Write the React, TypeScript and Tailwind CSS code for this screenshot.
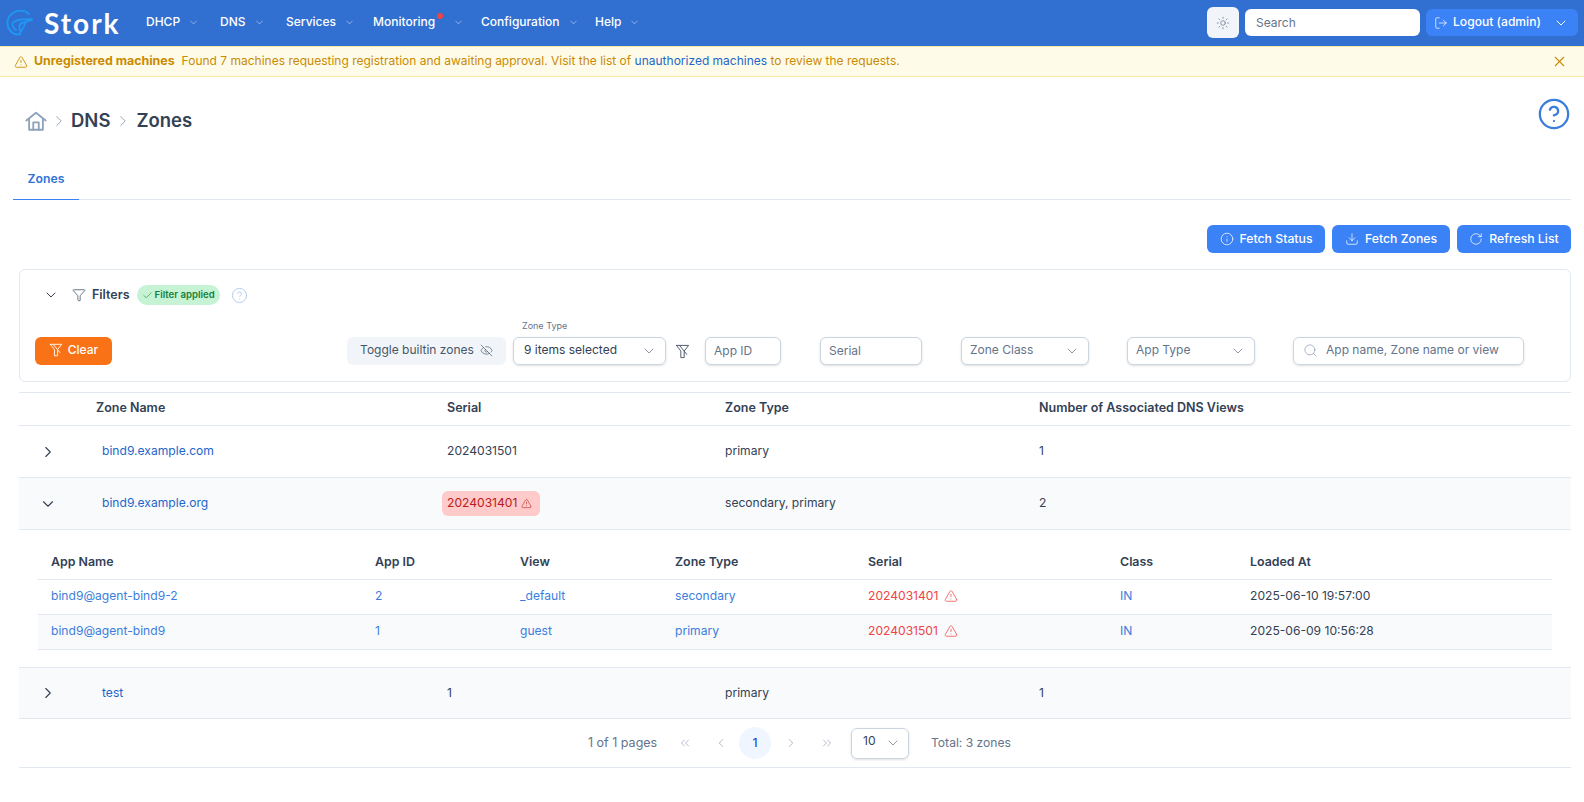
import {
  ChevronDown,
  ChevronLeft,
  ChevronRight,
  ChevronsLeft,
  ChevronsRight,
  Check,
  CircleHelp,
  Download,
  EyeOff,
  Funnel,
  Info,
  LogOut,
  RotateCw,
  Search,
  Sun,
  TriangleAlert,
  X,
} from "lucide-react";

const navItems = [
  { label: "DHCP", w: "w-[74px]" },
  { label: "DNS", w: "w-[66px]" },
  { label: "Services", w: "w-[87px]" },
  { label: "Monitoring", w: "w-[108px]", dot: true },
  { label: "Configuration", w: "w-[114px]" },
  { label: "Help", w: "w-[60px]" },
];

const zoneCols = "grid grid-cols-[77px_351px_278px_314px_1fr] items-center";
const appCols = "grid grid-cols-[324px_145px_155px_193px_252px_130px_1fr] items-center pl-[13px]";

const apps = [
  { name: "bind9@agent-bind9-2", id: "2", view: "_default", type: "secondary", serial: "2024031401", loaded: "2025-06-10 19:57:00", tint: false },
  { name: "bind9@agent-bind9", id: "1", view: "guest", type: "primary", serial: "2024031501", loaded: "2025-06-09 10:56:28", tint: true },
];

function Logo() {
  return (
    <svg width="27" height="27" viewBox="0 0 27 27" fill="none" stroke="#1f96f2" strokeWidth="1.9" strokeLinecap="round" strokeLinejoin="round">
      <path d="M23 5C19 0.8 11 0.5 6 4.5C0.5 9 0 17 4.5 22C7 24.8 11 26 14 25" />
      <path d="M26 10.5C20 9.5 11 10.5 7.5 13C5.5 15 6.5 19 10 21" />
      <path d="M26 10.5L16 14C13.5 15 13 18 14 21C14.5 23 14.5 24 14 25" />
      <path d="M19.5 13.5C18.5 17 17 20 14.5 23" />
    </svg>
  );
}

function HomeIcon() {
  return (
    <svg width="22" height="22" viewBox="0 0 24 24" fill="none" stroke="#8ea2bb" strokeWidth="2" strokeLinejoin="round" strokeLinecap="round">
      <path d="M1.5 11.5L12 3L22.5 11.5" />
      <path d="M4.5 10V21.5H19.5V10" />
      <path d="M9 21.5V13.5H15V21.5" />
    </svg>
  );
}

function FilterSlash({ className }: { className: string }) {
  return (
    <svg className={className} viewBox="0 0 16 16" fill="none" stroke="currentColor" strokeWidth="1" strokeLinejoin="round" strokeLinecap="round">
      <path d="M1.5 1.5H14.5L9.8 7.5V14.5H6.2V7.5L1.5 1.5" />
      <path d="M4.8 1.5L12.5 11" />
    </svg>
  );
}

function FilterInput({ placeholder, width }: { placeholder: string; width: string }) {
  return (
    <input
      readOnly
      placeholder={placeholder}
      className={`${width} h-[28px] rounded-md border border-[#cbd5e1] bg-white px-[8px] pb-[2px] text-[12px] shadow-sm outline-none placeholder:text-[#64748b]`}
    />
  );
}

function FilterSelect({ label, width }: { label: string; width: string }) {
  return (
    <div className={`${width} flex h-[28px] items-center justify-between rounded-md border border-[#cbd5e1] bg-white pl-[8px] pr-[8px] text-[12px] text-[#64748b] shadow-sm`}>
      <span className="-mt-[2px]">{label}</span>
      <ChevronDown className="h-[16px] w-[16px] text-[#64748b]" strokeWidth={1.1} />
    </div>
  );
}

function ActionButton({ icon, label, width }: { icon: React.ReactNode; label: string; width: string }) {
  return (
    <button className={`${width} flex h-[28px] items-center justify-center gap-[6px] rounded-md bg-[#3b82f6] text-[12.25px] font-medium text-white`}>
      {icon}
      {label}
    </button>
  );
}

export default function App() {
  return (
    <div className="min-h-screen w-[1584px] overflow-hidden bg-white font-['Inter',sans-serif] text-[12.1px] text-[#334155]">
      {/* top bar */}
      <header className="flex h-[46px] items-center bg-[#316fd0] pb-[1px] pl-[6px] pr-[6px]">
        <Logo />
        <span className="ml-[11px] w-[73px] font-['Lato',sans-serif] text-[28px] leading-none font-bold tracking-[2px] text-white">Stork</span>
        <nav className="-mt-[1px] ml-[29px] flex items-center text-[12px]">
          {navItems.map((item) => (
            <div key={item.label} className={`${item.w} relative flex items-center gap-[8px] font-medium text-white`}>
              <span className={item.dot ? "mr-[10px]" : ""}>{item.label}</span>
              {item.dot && <span className="absolute left-[64px] top-[0px] h-[6px] w-[6px] rounded-full bg-[#ef4444]" />}
              <ChevronDown className="h-[11px] w-[11px] text-[#bcd0ee]" strokeWidth={1.5} />
            </div>
          ))}
        </nav>
        <button className="ml-auto flex h-[31px] w-[32px] items-center justify-center rounded-md bg-[#f1f5f9]">
          <Sun className="h-[14px] w-[14px] text-[#64748b]" strokeWidth={1.25} />
        </button>
        <input
          readOnly
          placeholder="Search"
          className="ml-[6px] h-[27px] w-[175px] rounded-md bg-white px-[11px] text-[12px] outline-none placeholder:text-[#64748b]"
        />
        <div className="ml-[6px] flex h-[27px] w-[152px] items-center rounded-md bg-[#3b82f6] pl-[8px] pr-[9px] font-medium text-white">
          <LogOut className="mr-[5px] h-[14px] w-[14px]" strokeWidth={1.25} />
          <span>Logout (admin)</span>
          <ChevronDown className="ml-auto h-[16px] w-[16px]" strokeWidth={1.5} />
        </div>
      </header>

      {/* alert */}
      <div className="flex h-[31px] items-center border-y border-[#f8e8a0] bg-[#fefce8] pl-[14px] pr-[16px] text-[#ca8a04]">
        <TriangleAlert className="mr-[6px] h-[14px] w-[14px]" strokeWidth={1.5} />
        <span className="mr-[7px] text-[12.4px] font-bold">Unregistered machines</span>
        <span className="pb-[1px] text-[12px]">
          Found 7 machines requesting registration and awaiting approval. Visit the list of{" "}
          <a className="text-[#1d66cc]">unauthorized machines</a> to review the requests.
        </span>
        <X className="ml-auto h-[17px] w-[17px]" strokeWidth={1.5} />
      </div>

      <main className="pl-[13px] pr-[13px]">
        {/* breadcrumb */}
        <div className="flex h-[83px] items-center justify-between">
          <div className="flex items-center pl-[12px] pt-[4px] text-[18.5px] font-semibold text-[#334155]">
            <HomeIcon />
            <ChevronRight className="mx-[3px] h-[18px] w-[18px] text-[#94a3b8]" strokeWidth={1.25} />
            <span>DNS</span>
            <ChevronRight className="mx-[4px] h-[18px] w-[18px] text-[#94a3b8]" strokeWidth={1.25} />
            <span>Zones</span>
          </div>
          <CircleHelp className="-mt-[9px] h-[34px] w-[34px] text-[#3b7ddd]" strokeWidth={1.6} />
        </div>

        {/* tabs */}
        <div className="h-[40px] border-b border-[#e2e8f0]">
          <div className="flex h-[40px] w-[66px] items-center justify-center border-b border-[#3b82f6] text-[12.25px] font-semibold text-[#2f74d6]">Zones</div>
        </div>

        <div className="pl-[6px]">
          <div className="mt-[25px] flex justify-end gap-[7px]">
            <ActionButton icon={<Info className="h-[14px] w-[14px]" strokeWidth={1.25} />} label="Fetch Status" width="w-[118px]" />
            <ActionButton icon={<Download className="h-[14px] w-[14px]" strokeWidth={1.25} />} label="Fetch Zones" width="w-[118px]" />
            <ActionButton icon={<RotateCw className="h-[14px] w-[14px]" strokeWidth={1.25} />} label="Refresh List" width="w-[114px]" />
          </div>

          {/* filters */}
          <section className="mt-[16px] rounded-md border border-[#e2e8f0] pb-[16px] pt-[15px]">
            <div className="flex h-[20px] items-center pl-[23px]">
              <ChevronDown className="h-[16px] w-[16px] text-[#334155]" strokeWidth={1.5} />
              <Funnel className="ml-[13px] h-[14px] w-[14px] text-[#334155]" strokeWidth={1.25} />
              <span className="ml-[6px] text-[12.5px] font-semibold">Filters</span>
              <span className="ml-[7px] flex h-[20px] w-[83px] items-center justify-center gap-[2px] rounded-full bg-[#c5f3d4] text-[9.6px] font-semibold text-[#15803d]">
                <Check className="h-[11px] w-[11px]" strokeWidth={1.25} />
                Filter applied
              </span>
              <CircleHelp className="ml-[11px] h-[17px] w-[17px] text-[#a9c6f2]" strokeWidth={1.25} />
            </div>
            <div className="mt-[32px] flex h-[28px] items-center pl-[15px] text-[12px]">
              <button className="flex h-[28px] w-[77px] items-center justify-center gap-[5px] rounded-md bg-[#f97316] pb-[2px] font-medium text-white">
                <FilterSlash className="h-[14px] w-[14px]" />
                Clear
              </button>
              <button className="ml-[235px] flex h-[28px] w-[159px] items-center justify-center gap-[6px] rounded-md bg-[#f1f5f9] pb-[2px] text-[#475569]">
                Toggle builtin zones
                <EyeOff className="h-[13px] w-[13px]" strokeWidth={1.25} />
              </button>
              <div className="relative ml-[7px] flex h-[28px] w-[153px] items-center justify-between rounded-md border border-[#cbd5e1] pl-[10px] pr-[8px] text-[#334155] shadow-sm">
                <span className="absolute -top-[19px] left-[8px] text-[9px] text-[#64748b]">Zone Type</span>
                <span className="-mt-[2px]">9 items selected</span>
                <ChevronDown className="h-[16px] w-[16px] text-[#64748b]" strokeWidth={1.1} />
              </div>
              <FilterSlash className="ml-[9px] h-[15px] w-[15px] text-[#475569]" />
              <div className="ml-[15px]"><FilterInput placeholder="App ID" width="w-[76px]" /></div>
              <div className="ml-[39px]"><FilterInput placeholder="Serial" width="w-[102px]" /></div>
              <div className="ml-[39px]"><FilterSelect label="Zone Class" width="w-[128px]" /></div>
              <div className="ml-[38px]"><FilterSelect label="App Type" width="w-[128px]" /></div>
              <div className="relative ml-[38px] flex h-[28px] w-[231px] items-center gap-[8px] rounded-md border border-[#cbd5e1] pl-[9px] text-[#64748b] shadow-sm">
                <Search className="-mt-[1px] h-[15px] w-[15px] text-[#94a3b8]" strokeWidth={1.25} />
                <span className="-mt-[2px]">App name, Zone name or view</span>
              </div>
            </div>
          </section>

          {/* zones table */}
          <div className="mt-[10px] border-t border-[#e2e8f0] text-[#334155]">
            <div className={`${zoneCols} h-[33px] border-b border-[#e2e8f0] pb-[1px] text-[12.5px] font-semibold`}>
              <div className="col-start-2">Zone Name</div>
              <div>Serial</div>
              <div>Zone Type</div>
              <div>Number of Associated DNS Views</div>
            </div>

            <div className={`${zoneCols} h-[52px] border-b border-[#e2e8f0]`}>
              <ChevronRight className="ml-[20px] h-[18px] w-[18px]" strokeWidth={1.5} />
              <a className="pl-[6px] text-[#1d66cc]">bind9.example.com</a>
              <div>2024031501</div>
              <div>primary</div>
              <div>1</div>
            </div>

            <div className={`${zoneCols} h-[52px] border-b border-[#e2e8f0] bg-[#f8fafc]`}>
              <ChevronDown className="ml-[20px] h-[18px] w-[18px]" strokeWidth={1.5} />
              <a className="pl-[6px] text-[#1d66cc]">bind9.example.org</a>
              <div>
                <span className="-ml-[5px] inline-flex h-[25px] w-[98px] items-center gap-[4px] rounded-md bg-[#fecaca] pl-[5px] text-[#b91c1c]">
                  2024031401
                  <TriangleAlert className="h-[11px] w-[11px]" strokeWidth={1.25} />
                </span>
              </div>
              <div>secondary, primary</div>
              <div>2</div>
            </div>

            {/* per-app details of the expanded zone */}
            <div className="h-[138px] border-b border-[#e2e8f0] pl-[19px] pr-[19px] pt-[16px]">
              <div className={`${appCols} h-[34px] border-b border-[#e2e8f0] pb-[1px] text-[12.4px] font-semibold`}>
                <div>App Name</div>
                <div>App ID</div>
                <div>View</div>
                <div>Zone Type</div>
                <div>Serial</div>
                <div>Class</div>
                <div>Loaded At</div>
              </div>
              {apps.map((app) => (
                <div key={app.name} className={`${appCols} h-[35px] border-b border-[#e2e8f0] pb-[2px] ${app.tint ? "bg-[#f8fafc]" : ""}`}>
                  <a className="text-[#3b7ddd]">{app.name}</a>
                  <a className="text-[#3b7ddd]">{app.id}</a>
                  <a className="text-[#3b7ddd]">{app.view}</a>
                  <a className="text-[#3b7ddd]">{app.type}</a>
                  <div className="flex items-center gap-[6px] text-[#ef4444]">
                    {app.serial}
                    <TriangleAlert className="h-[14px] w-[14px]" strokeWidth={1.25} />
                  </div>
                  <a className="text-[#3b7ddd]">IN</a>
                  <div>{app.loaded}</div>
                </div>
              ))}
            </div>

            <div className={`${zoneCols} h-[51px] border-b border-[#e2e8f0] bg-[#f8fafc]`}>
              <ChevronRight className="ml-[20px] h-[18px] w-[18px]" strokeWidth={1.5} />
              <a className="pl-[6px] text-[#1d66cc]">test</a>
              <div>1</div>
              <div>primary</div>
              <div>1</div>
            </div>
          </div>

          {/* paginator */}
          <div className="flex h-[49px] items-center border-b border-[#e2e8f0] pl-[569px] text-[#64748b]">
            <span className="w-[90px] text-[12.5px]">1 of 1 pages</span>
            <ChevronsLeft className="h-[14px] w-[14px] text-[#94a3b8]" strokeWidth={1.25} />
            <ChevronLeft className="ml-[22px] h-[14px] w-[14px] text-[#94a3b8]" strokeWidth={1.25} />
            <span className="ml-[11px] flex h-[32px] w-[32px] items-center justify-center rounded-full bg-[#eff6ff] font-medium text-[#1d4ed8]">1</span>
            <ChevronRight className="ml-[13px] h-[14px] w-[14px] text-[#94a3b8]" strokeWidth={1.25} />
            <ChevronsRight className="ml-[22px] h-[14px] w-[14px] text-[#94a3b8]" strokeWidth={1.25} />
            <div className="ml-[17px] flex h-[31px] w-[58px] items-center justify-between rounded-md border border-[#cbd5e1] pl-[11px] pr-[7px] text-[#334155] shadow-sm">
              <span className="-mt-[3px]">10</span>
              <ChevronDown className="h-[16px] w-[16px] text-[#64748b]" strokeWidth={1.1} />
            </div>
            <span className="ml-[22px]">Total: 3 zones</span>
          </div>
        </div>
      </main>
    </div>
  );
}
